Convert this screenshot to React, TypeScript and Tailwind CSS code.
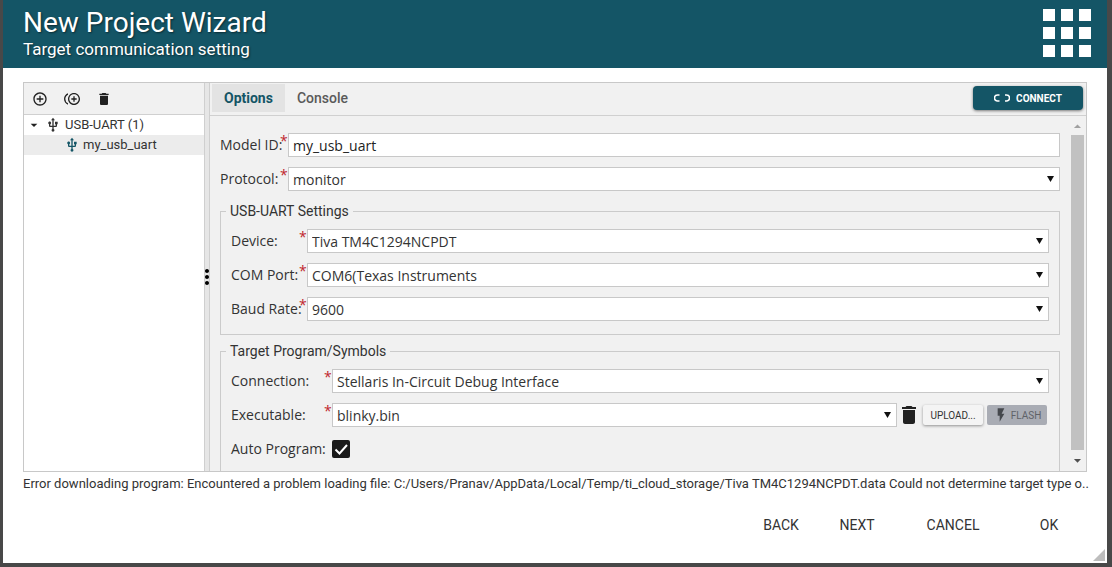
import { useState } from 'react'
import type { ReactNode } from 'react'
import {
  MdAddCircleOutline,
  MdArrowDropDown,
  MdArrowDropUp,
  MdControlPointDuplicate,
  MdDelete,
  MdFlashOn,
  MdMoreVert,
  MdUsb,
} from 'react-icons/md'

interface FieldProps {
  id: string
  label: string
  labelClass: string
  required?: boolean
  children: ReactNode
}

function Field({ id, label, labelClass, required = true, children }: FieldProps) {
  return (
    <div className="flex h-6 items-center">
      <label htmlFor={id} className={`shrink-0 pb-0.5 whitespace-nowrap ${labelClass}`}>
        {label}
      </label>
      <span className="w-2 shrink-0 self-start text-[14px] leading-4 text-[#c0272d]">
        {required ? '*' : ''}
      </span>
      {children}
    </div>
  )
}

function SelectBox({ id, options }: { id: string; options: string[] }) {
  return (
    <div className="relative min-w-0 flex-1">
      <select
        id={id}
        className="block h-6 w-full appearance-none border border-[#c8c8c8] bg-white pr-6 pl-1 text-[14px] text-[#333]"
      >
        {options.map(option => (
          <option key={option}>{option}</option>
        ))}
      </select>
      <svg className="pointer-events-none absolute top-[9px] right-1.5 h-1.5 w-[7px]" viewBox="0 0 7 6">
        <path d="M0 0h7L3.500 6z" fill="#111" />
      </svg>
    </div>
  )
}

function Group({ title, children }: { title: string; children: ReactNode }) {
  return (
    <fieldset className="min-w-0 border border-[#cbcbcb] px-2.5 pb-[13px]">
      <legend className="-ml-[5px] px-1 font-[Roboto,sans-serif] text-[14px] leading-5 text-[#333]">
        {title}
      </legend>
      <div className="flex flex-col gap-2.5 pt-2">{children}</div>
    </fieldset>
  )
}

function TargetTree() {
  return (
    <aside className="flex w-[180px] shrink-0 flex-col bg-white">
      <div className="flex h-8 items-center gap-4 border-b border-[#d0d0d0] bg-[#f1f1f1] pl-2 text-[#212121]">
        <button type="button" aria-label="Add model">
          <MdAddCircleOutline className="size-4" />
        </button>
        <button type="button" aria-label="Duplicate model">
          <MdControlPointDuplicate className="size-4" />
        </button>
        <button type="button" aria-label="Delete model">
          <MdDelete className="size-4" />
        </button>
      </div>
      <ul className="text-[13px] leading-5 text-[#333]">
        <li>
          <div className="flex items-center pl-0.5">
            <MdArrowDropDown className="mr-[3px] size-4 text-[#212121]" />
            <MdUsb className="mr-1 size-4" />
            USB-UART (1)
          </div>
          <ul>
            <li className="flex items-center bg-[#ececec] pl-10">
              <MdUsb className="mr-[3px] size-4 text-[#145566]" />
              my_usb_uart
            </li>
          </ul>
        </li>
      </ul>
    </aside>
  )
}

function OptionsForm() {
  const [modelId, setModelId] = useState('my_usb_uart')
  const [autoProgram, setAutoProgram] = useState(true)

  return (
    <form className="flex min-w-0 flex-1 flex-col gap-2.5 overflow-hidden pt-[15px] pr-[11px] pl-2.5 font-['Open_Sans',sans-serif] text-[14px] text-[#333]">
      <Field id="model-id" label="Model ID:" labelClass="w-[60px]">
        <input
          id="model-id"
          type="text"
          value={modelId}
          onChange={e => setModelId(e.target.value)}
          className="h-6 min-w-0 flex-1 border border-[#c8c8c8] bg-white px-1 text-[#222]"
        />
      </Field>
      <Field id="protocol" label="Protocol:" labelClass="w-[60px]">
        <SelectBox id="protocol" options={['monitor']} />
      </Field>

      <Group title="USB-UART Settings">
        <Field id="device" label="Device:" labelClass="w-[68px]">
          <SelectBox id="device" options={['Tiva TM4C1294NCPDT']} />
        </Field>
        <Field id="com-port" label="COM Port:" labelClass="w-[68px]">
          <SelectBox id="com-port" options={['COM6(Texas Instruments']} />
        </Field>
        <Field id="baud-rate" label="Baud Rate:" labelClass="w-[68px]">
          <SelectBox id="baud-rate" options={['9600']} />
        </Field>
      </Group>

      <div className="-mt-1">
        <Group title="Target Program/Symbols">
          <Field id="connection" label="Connection:" labelClass="w-[93px]">
            <SelectBox id="connection" options={['Stellaris In-Circuit Debug Interface']} />
          </Field>
          <Field id="executable" label="Executable:" labelClass="w-[93px]">
            <SelectBox id="executable" options={['blinky.bin']} />
            <button type="button" aria-label="Remove executable" className="mr-0.5 text-[#212121]">
              <MdDelete className="size-6" />
            </button>
            <button
              type="button"
              className="mr-1 h-5 w-[60px] rounded-xs bg-[#f4f4f4] font-[Roboto,sans-serif] text-[10px] text-[#333] shadow-[0_1px_3px_rgba(0,0,0,0.4)]"
            >
              UPLOAD...
            </button>
            <button
              type="button"
              disabled
              className="mr-0.5 flex h-5 w-[60px] items-center justify-center rounded-xs bg-[#a9acb4] font-[Roboto,sans-serif] text-[10px] text-[#5f6268]"
            >
              <MdFlashOn className="mr-0.5 size-4 text-[#45484d]" />
              FLASH
            </button>
          </Field>
          <Field id="auto-program" label="Auto Program:" labelClass="w-[93px]" required={false}>
            <span className="relative size-[18px]">
              <input
                id="auto-program"
                type="checkbox"
                checked={autoProgram}
                onChange={e => setAutoProgram(e.target.checked)}
                className="block size-[18px] appearance-none rounded-xs border-2 border-[#1a1a1a] checked:bg-[#1a1a1a]"
              />
              {autoProgram && (
                <svg className="pointer-events-none absolute inset-0 size-[18px]" viewBox="0 0 18 18" fill="none">
                  <path d="M3.5 9.5l4 4 7.5-8.5" stroke="#fff" strokeWidth="2" />
                </svg>
              )}
            </span>
          </Field>
        </Group>
      </div>
    </form>
  )
}

function ScrollTrack() {
  return (
    <div className="mr-0.5 flex w-[13px] shrink-0 flex-col items-center">
      <MdArrowDropUp className="size-[17px] shrink-0 text-[#a0a0a0]" />
      <div className="w-full flex-1 bg-[#c1c1c1]" />
      <MdArrowDropDown className="my-0.5 size-[17px] shrink-0 text-[#505050]" />
    </div>
  )
}

export default function App() {
  return (
    <div className="flex h-screen bg-[#484848] pr-[5px] pb-1 pl-[3px] font-[Roboto,sans-serif]">
      <main className="relative flex min-w-0 flex-1 flex-col bg-white">
        <header className="flex h-[68px] shrink-0 items-center justify-between bg-[#145566] pr-4 pl-5 text-white">
          <div className="pb-0.5 [text-shadow:1px_1px_2px_rgba(0,0,0,0.5)]">
            <h1 className="text-[28px] leading-8">New Project Wizard</h1>
            <p className="text-[17px] leading-5">Target communication setting</p>
          </div>
          <svg className="mb-0.5 size-12" viewBox="4 4 16 16" fill="#fff" aria-hidden="true">
            <path d="M4 8h4V4H4v4zm6 12h4v-4h-4v4zm-6 0h4v-4H4v4zm0-6h4v-4H4v4zm6 0h4v-4h-4v4zm6-10v4h4V4h-4zm-6 4h4V4h-4v4zm6 6h4v-4h-4v4zm0 6h4v-4h-4v4z" />
          </svg>
        </header>

        <div className="mx-5 mt-3.5 flex min-h-0 flex-1 border border-[#c8c8c8] bg-[#f1f1f1]">
          <TargetTree />
          <div className="flex w-1.5 shrink-0 items-center justify-center border-x border-[#cfcfcf] bg-[#e6e6e6]">
            <MdMoreVert className="size-6 shrink-0 text-black" />
          </div>
          <section className="flex min-w-0 flex-1 flex-col">
            <div className="flex h-[33px] shrink-0 items-center border-b border-[#d0d0d0] pr-[3px] pb-0.5 pl-0.5">
              <button type="button" className="h-7 bg-[#e3e3e3] px-3 text-[14px] font-bold text-[#145566]">
                Options
              </button>
              <button type="button" className="h-7 px-3 text-[14px] font-medium text-[#5a5a5a]">
                Console
              </button>
              <button
                type="button"
                className="ml-auto flex h-6 w-[110px] items-center justify-center gap-1.5 rounded-sm bg-[#145566] text-[10px] font-bold text-white shadow-[0_1px_3px_rgba(0,0,0,0.5)]"
              >
                <svg className="h-2 w-4" viewBox="0 0 16 8" fill="none" stroke="#fff" strokeWidth="1.5">
                  <path d="M5.500 1H3.500a3 3 0 0 0 0 6H5.500M11 1H12.500a3 3 0 0 1 0 6H11" />
                </svg>
                CONNECT
              </button>
            </div>
            <div className="mt-0.5 flex min-h-0 flex-1">
              <OptionsForm />
              <ScrollTrack />
            </div>
          </section>
        </div>

        <p className="mt-0.5 ml-5 shrink-0 text-[13px] leading-5 text-[#333]">
          Error downloading program: Encountered a problem loading file:
          C:/Users/Pranav/AppData/Local/Temp/ti_cloud_storage/Tiva TM4C1294NCPDT.data Could not determine target type o..
        </p>

        <footer className="flex shrink-0 justify-end pt-3.5 pr-2.5 pb-[21px] text-[14px] text-[#333]">
          <button type="button" className="h-[34px] w-[76px]">BACK</button>
          <button type="button" className="mr-2.5 h-[34px] w-[76px]">NEXT</button>
          <button type="button" className="h-[34px] w-24">CANCEL</button>
          <button type="button" className="h-[34px] w-24">OK</button>
        </footer>

        {/* resize grip */}
        <svg className="absolute right-0.5 bottom-0.5 size-3" viewBox="0 0 12 12">
          <path d="M12 0v12H0z" fill="#bdbdbd" />
        </svg>
      </main>
    </div>
  )
}
